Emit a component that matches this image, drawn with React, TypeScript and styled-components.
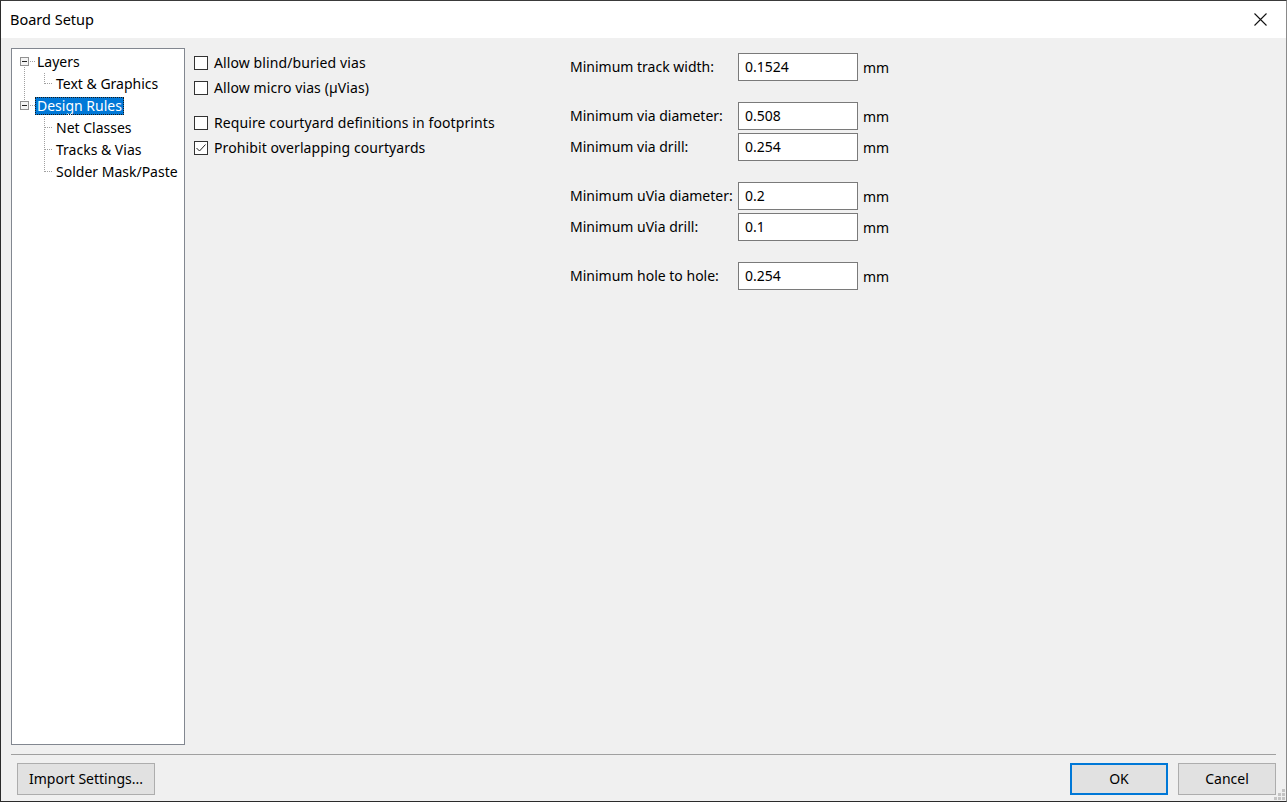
import React from "react";
import styled, { createGlobalStyle } from "styled-components";

const Global = createGlobalStyle`
  html, body { margin: 0; padding: 0; overflow: hidden; background: #f0f0f0; }
  * { box-sizing: border-box; }
`;

const FONT = `"Noto Sans", "Open Sans", sans-serif`;

const Window = styled.div`
  width: 1287px;
  height: 802px;
  display: flex;
  flex-direction: column;
  background: #f0f0f0;
  border-top: 1px solid #3a3a3a;
  border-left: 1px solid #2b2b2b;
  border-right: 1px solid #8a8a8a;
  border-bottom: 1px solid #2b2b2b;
  font-family: ${FONT};
  font-size: 14px;
  color: #000;
  position: relative;
`;

const TitleBar = styled.div`
  height: 37px;
  flex: none;
  background: #fff;
  display: flex;
  align-items: center;
  justify-content: space-between;
  padding: 0 14px 0 9px;
`;

const Title = styled.span`
  font-size: 14.5px;
  line-height: 1;
  padding-bottom: 1px;
`;

const CloseBtn = styled.button`
  width: 24px;
  height: 24px;
  border: none;
  background: transparent;
  padding: 0;
  display: flex;
  align-items: center;
  justify-content: center;
`;

const Body = styled.div`
  flex: 1;
  display: flex;
  gap: 9px;
  padding: 10px 10px 0 10px;
  min-height: 0;
`;

const Tree = styled.div`
  width: 174px;
  flex: none;
  background: #fff;
  border: 1px solid #828790;
  padding-top: 2px;
  display: flex;
  flex-direction: column;
`;

const TreeRowEl = styled.div`
  height: 22px;
  display: flex;
  align-items: center;
  white-space: nowrap;
`;

const TreeLabel = styled.span<{ $selected?: boolean }>`
  padding: 0 2px;
  height: 18px;
  display: flex;
  align-items: center;
  margin-top: -1px;
  background: ${(p) => (p.$selected ? "#0078d7" : "transparent")};
  color: ${(p) => (p.$selected ? "#fff" : "#000")};
  outline: ${(p) => (p.$selected ? "1px dotted #1a1a1a" : "none")};
  outline-offset: -1px;
`;

const Content = styled.div`
  flex: 1;
  display: flex;
`;

const CheckColumn = styled.div`
  width: 376px;
  flex: none;
  padding-top: 2px;
  display: flex;
  flex-direction: column;
  gap: 10px;
`;

const CheckGroup = styled.div`
  display: flex;
  flex-direction: column;
`;

const CheckRow = styled.label`
  height: 25px;
  display: flex;
  align-items: center;
  gap: 6px;
  white-space: nowrap;
  letter-spacing: 0.1px;
`;

const Box = styled.span`
  width: 14px;
  height: 14px;
  flex: none;
  border: 1px solid #333;
  background: #fff;
  display: flex;
  align-items: center;
  justify-content: center;
  margin-top: 1px;
`;

const Form = styled.div`
  padding-top: 5px;
  display: flex;
  flex-direction: column;
  gap: 21px;
`;

const FieldGroup = styled.div`
  display: flex;
  flex-direction: column;
  gap: 3px;
`;

const FieldRow = styled.div`
  display: grid;
  grid-template-columns: 168px 120px auto;
  align-items: center;
  height: 28px;
`;

const FieldLabel = styled.span`
  white-space: nowrap;
  padding-bottom: 1px;
`;

const Input = styled.input`
  width: 120px;
  height: 28px;
  border: 1px solid #7a7a7a;
  background: #fff;
  padding: 0 6px 1px 6px;
  font-family: ${FONT};
  font-size: 14px;
  color: #000;
  outline: none;
`;

const Unit = styled.span`
  padding-left: 5px;
`;

const Footer = styled.div`
  flex: none;
  display: flex;
  flex-direction: column;
  padding: 9px 10px 6px 10px;
  gap: 8px;
`;

const Separator = styled.div`
  height: 1px;
  background: #a0a0a0;
`;

const ButtonBar = styled.div`
  display: flex;
  align-items: center;
  padding-left: 6px;
`;

const Spacer = styled.div`
  flex: 1;
`;

const Button = styled.button<{ $default?: boolean; $width: number }>`
  width: ${(p) => p.$width}px;
  height: 32px;
  background: #e1e1e1;
  border: ${(p) => (p.$default ? "2px solid #0078d7" : "1px solid #adadad")};
  font-family: ${FONT};
  font-size: 14px;
  color: #000;
  padding: 0 0 2px 0;
  margin-left: ${(p) => (p.$default ? 0 : 10)}px;
  &:first-child { margin-left: 0; }
`;

const Grip = styled.svg`
  position: absolute;
  right: 1px;
  bottom: 1px;
`;

const DOT = { stroke: "#a0a0a0", strokeDasharray: "1 1", shapeRendering: "crispEdges" as const };

type RootProps = { up?: boolean; down?: boolean };
const RootGuide = ({ up, down }: RootProps) => (
  <svg width={23} height={22} style={{ flex: "none" }}>
    {up && <line x1={12.5} y1={0} x2={12.5} y2={6} {...DOT} />}
    {down && <line x1={12.5} y1={16} x2={12.5} y2={22} {...DOT} />}
    <line x1={18} y1={10.5} x2={23} y2={10.5} {...DOT} />
    <rect x={8.5} y={6.5} width={8} height={8} fill="#f4f4f4" stroke="#919191" shapeRendering="crispEdges" />
    <line x1={10} y1={10.5} x2={15} y2={10.5} stroke="#222" shapeRendering="crispEdges" />
  </svg>
);

type ChildProps = { rootLine?: boolean; last?: boolean };
const ChildGuide = ({ rootLine, last }: ChildProps) => (
  <svg width={42} height={22} style={{ flex: "none" }}>
    {rootLine && <line x1={12.5} y1={0} x2={12.5} y2={22} {...DOT} />}
    <line x1={32.5} y1={0} x2={32.5} y2={last ? 11 : 22} {...DOT} />
    <line x1={33} y1={10.5} x2={41} y2={10.5} {...DOT} />
  </svg>
);

const Check = ({ checked, label }: { checked?: boolean; label: string }) => (
  <CheckRow>
    <Box>
      {checked && (
        <svg width={12} height={12} viewBox="0 0 12 12">
          <polyline points="1.5,6 4.5,9 10.5,2.5" fill="none" stroke="#222" strokeWidth={1} />
        </svg>
      )}
    </Box>
    {label}
  </CheckRow>
);

const Field = ({ label, value }: { label: string; value: string }) => (
  <FieldRow>
    <FieldLabel>{label}</FieldLabel>
    <Input defaultValue={value} />
    <Unit>mm</Unit>
  </FieldRow>
);

export default function App() {
  return (
    <>
      <Global />
      <Window>
        <TitleBar>
          <Title>Board Setup</Title>
          <CloseBtn aria-label="Close">
            <svg width={13} height={13} viewBox="0 0 13 13">
              <path d="M0.5 0.5 L12.5 12.5 M12.5 0.5 L0.5 12.5" stroke="#111" strokeWidth={1.1} />
            </svg>
          </CloseBtn>
        </TitleBar>
        <Body>
          <Tree>
            <TreeRowEl>
              <RootGuide down />
              <TreeLabel>Layers</TreeLabel>
            </TreeRowEl>
            <TreeRowEl>
              <ChildGuide rootLine last />
              <TreeLabel>Text &amp; Graphics</TreeLabel>
            </TreeRowEl>
            <TreeRowEl>
              <RootGuide up />
              <TreeLabel $selected>Design Rules</TreeLabel>
            </TreeRowEl>
            <TreeRowEl>
              <ChildGuide />
              <TreeLabel>Net Classes</TreeLabel>
            </TreeRowEl>
            <TreeRowEl>
              <ChildGuide />
              <TreeLabel>Tracks &amp; Vias</TreeLabel>
            </TreeRowEl>
            <TreeRowEl>
              <ChildGuide last />
              <TreeLabel>Solder Mask/Paste</TreeLabel>
            </TreeRowEl>
          </Tree>
          <Content>
            <CheckColumn>
              <CheckGroup>
                <Check label="Allow blind/buried vias" />
                <Check label="Allow micro vias (µVias)" />
              </CheckGroup>
              <CheckGroup>
                <Check label="Require courtyard definitions in footprints" />
                <Check checked label="Prohibit overlapping courtyards" />
              </CheckGroup>
            </CheckColumn>
            <Form>
              <FieldGroup>
                <Field label="Minimum track width:" value="0.1524" />
              </FieldGroup>
              <FieldGroup>
                <Field label="Minimum via diameter:" value="0.508" />
                <Field label="Minimum via drill:" value="0.254" />
              </FieldGroup>
              <FieldGroup>
                <Field label="Minimum uVia diameter:" value="0.2" />
                <Field label="Minimum uVia drill:" value="0.1" />
              </FieldGroup>
              <FieldGroup>
                <Field label="Minimum hole to hole:" value="0.254" />
              </FieldGroup>
            </Form>
          </Content>
        </Body>
        <Footer>
          <Separator />
          <ButtonBar>
            <Button $width={138}>Import Settings...</Button>
            <Spacer />
            <Button $default $width={98}>OK</Button>
            <Button $width={98}>Cancel</Button>
          </ButtonBar>
        </Footer>
        <Grip width={11} height={11} viewBox="0 0 11 11">
          {[
            [8, 0],
            [4, 4],
            [8, 4],
            [0, 8],
            [4, 8],
            [8, 8],
          ].map(([x, y]) => (
            <rect key={`${x}-${y}`} x={x} y={y} width={3} height={3} fill="#c4c4c4" />
          ))}
        </Grip>
      </Window>
    </>
  );
}
